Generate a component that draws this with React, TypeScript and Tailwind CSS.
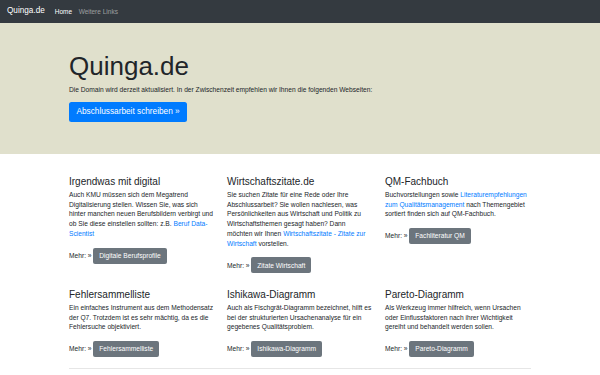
import React from "react";

const Link = ({ children }: { children: React.ReactNode }) => (
  <a href="#" className="text-[#007bff]">
    {children}
  </a>
);

const Card = ({
  title,
  children,
  button,
}: {
  title: string;
  children: React.ReactNode;
  button: string;
}) => (
  <div className="flex flex-col">
    <h2 className="text-[10px] leading-[12px] mb-[2px] text-[#212529]">{title}</h2>
    <p className="text-[6.65px] leading-[9.75px] mb-[9px]">{children}</p>
    <div className="flex items-center text-[6.65px] leading-[9.75px]">
      <span>Mehr: »</span>
      <a
        href="#"
        className="ml-[1.8px] block bg-[#6c757d] text-white rounded-[2px] px-[6px] py-[3.1px] text-[6.65px] leading-[9.75px]"
      >
        {button}
      </a>
    </div>
  </div>
);

export default function App() {
  return (
    <div className="min-h-screen bg-white text-[#212529] font-['Liberation_Sans',Arial,sans-serif]">
      <nav className="h-[23px] bg-[#343a40] flex items-center px-[7px]">
        <a href="#" className="text-[8.2px] text-white mr-[6.6px]">
          Quinga.de
        </a>
        <a href="#" className="px-[3.3px] text-[6.5px] text-white">
          Home
        </a>
        <a href="#" className="px-[3.3px] text-[6.5px] text-white/50">
          Weitere Links
        </a>
      </nav>

      <div className="bg-[#e0e0cc] pt-[28px] pb-[32px]">
        <div className="w-[462px] mx-auto">
          <h1 className="text-[26px] leading-[31.2px] mb-[3px]">Quinga.de</h1>
          <p className="text-[6.65px] leading-[9.75px] mb-[7px]">
            Die Domain wird derzeit aktualisiert. In der Zwischenzeit empfehlen wir Ihnen die folgenden Webseiten:
          </p>
          <div className="flex">
            <a
              href="#"
              className="block bg-[#007bff] text-white rounded-[2.5px] px-[7.5px] py-[3.8px] text-[8.25px] leading-[12.4px]"
            >
              Abschlussarbeit schreiben »
            </a>
          </div>
        </div>
      </div>

      <div className="w-[462px] mx-auto pt-[22px]">
        <div className="grid grid-cols-[145px_145px_145px] gap-x-[13px] gap-y-[15.5px]">
          <Card title="Irgendwas mit digital" button="Digitale Berufsprofile">
            Auch KMU müssen sich dem Megatrend Digitalisierung stellen. Wissen Sie, was sich hinter manchen
            neuen Berufsbildern verbirgt und ob Sie diese einstellen sollten: z.B. <Link>Beruf Data-Scientist</Link>
          </Card>
          <Card title="Wirtschaftszitate.de" button="Zitate Wirtschaft">
            Sie suchen Zitate für eine Rede oder Ihre Abschlussarbeit? Sie wollen nachlesen, was Persönlichkeiten
            aus Wirtschaft und Politik zu Wirtschaftsthemen gesagt haben? Dann möchten wir Ihnen{" "}
            <Link>Wirtschaftszitate - Zitate zur Wirtschaft</Link> vorstellen.
          </Card>
          <Card title="QM-Fachbuch" button="Fachliteratur QM">
            Buchvorstellungen sowie <Link>Literaturempfehlungen zum Qualitätsmanagement</Link> nach Themengebiet
            sortiert finden sich auf QM-Fachbuch.
          </Card>
          <Card title="Fehlersammelliste" button="Fehlersammelliste">
            Ein einfaches Instrument aus dem Methodensatz der Q7. Trotzdem ist es sehr mächtig, da es die
            Fehlersuche objektiviert.
          </Card>
          <Card title="Ishikawa-Diagramm" button="Ishikawa-Diagramm">
            Auch als Fischgrät-Diagramm bezeichnet, hilft es bei der strukturierten Ursachenanalyse für ein
            gegebenes Qualitätsproblem.
          </Card>
          <Card title="Pareto-Diagramm" button="Pareto-Diagramm">
            Als Werkzeug immer hilfreich, wenn Ursachen oder Einflussfaktoren nach ihrer Wichtigkeit gereiht und
            behandelt werden sollen.
          </Card>
        </div>
        <hr className="mt-[10.75px] border-t border-[#e6e6e6]" />
        <div className="h-[40px]" />
      </div>
    </div>
  );
}
